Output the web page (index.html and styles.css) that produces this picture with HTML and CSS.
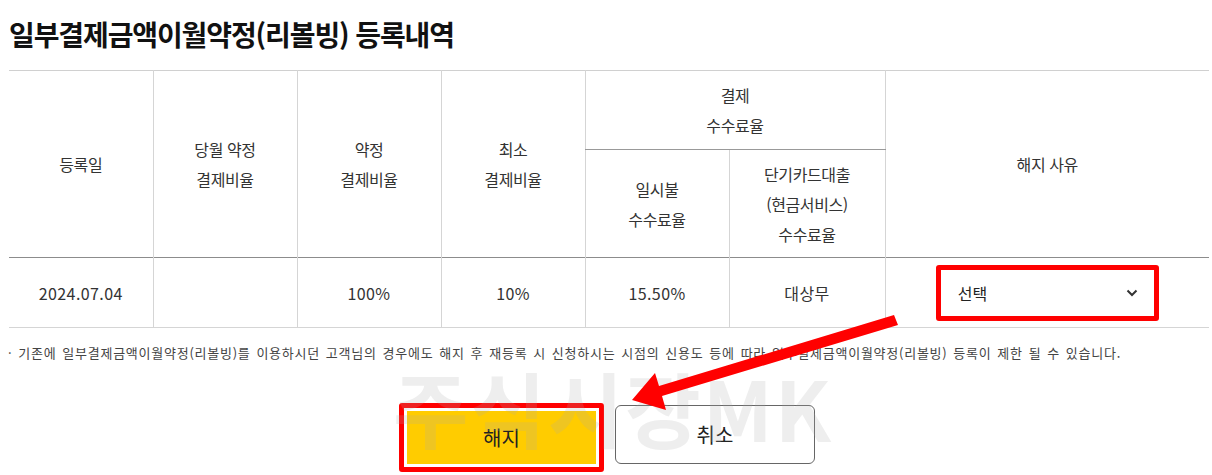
FILE: index.html
```html
<!DOCTYPE html>
<html lang="ko">

<head>
    <meta charset="UTF-8">
    <meta name="viewport" content="width=device-width, initial-scale=1.0">
    <title>일부결제금액이월약정(리볼빙) 등록내역</title>
    <link rel="stylesheet" href="styles.css">
</head>

<body>
    <div class="page">
        <h2 class="title">일부결제금액이월약정(리볼빙) 등록내역</h2>

        <table class="history">
            <colgroup>
                <col class="col-narrow">
                <col class="col-narrow">
                <col class="col-narrow">
                <col class="col-narrow">
                <col class="col-narrow">
                <col class="col-cash">
                <col class="col-reason">
            </colgroup>
            <thead>
                <tr class="row-top">
                    <th rowspan="2">등록일</th>
                    <th rowspan="2">당월 약정<br>결제비율</th>
                    <th rowspan="2">약정<br>결제비율</th>
                    <th rowspan="2">최소<br>결제비율</th>
                    <th colspan="2" class="group">결제<br>수수료율</th>
                    <th rowspan="2">해지 사유</th>
                </tr>
                <tr class="row-sub">
                    <th>일시불<br>수수료율</th>
                    <th>단기카드대출<br>(현금서비스)<br>수수료율</th>
                </tr>
            </thead>
            <tbody>
                <tr class="row-data">
                    <td>2024.07.04</td>
                    <td></td>
                    <td>100%</td>
                    <td>10%</td>
                    <td>15.50%</td>
                    <td>대상무</td>
                    <td>
                        <div class="reason-select">
                            <span>선택</span>
                            <svg class="chevron" width="12" height="8" viewBox="0 0 12 8">
                                <path d="M1.5 1.5 L6 6 L10.5 1.5" fill="none" stroke="#333" stroke-width="2" />
                            </svg>
                        </div>
                    </td>
                </tr>
            </tbody>
        </table>

        <p class="note">· 기존에 일부결제금액이월약정(리볼빙)를 이용하시던 고객님의 경우에도 해지 후 재등록 시 신청하시는 시점의 신용도 등에 따라 일부결제금액이월약정(리볼빙) 등록이 제한 될 수 있습니다.</p>
    </div>

    <div class="actions">
        <div class="highlight">
            <button class="btn btn-cancel-plan">해지</button>
        </div>
        <button class="btn btn-back">취소</button>
    </div>

    <!-- watermark and the red arrow sit over the page -->
    <div class="watermark">주식시장MK</div>
    <svg class="annotation" width="1212" height="475" viewBox="0 0 1212 475">
        <polygon points="632,400 655,373 659,386 894,315 898,325 662,396 666,410" fill="#ff0000" />
    </svg>
</body>

</html>
```

FILE: styles.css
```css
/* Reset */
* {
    margin: 0;
    padding: 0;
    box-sizing: border-box;
}

body {
    font-family: "Noto Sans CJK KR", "Noto Sans", sans-serif;
    color: #333;
    background: #fff;
    position: relative;
    width: 1212px;
    height: 475px;
    overflow: hidden;
}

.page {
    width: 1200px;
    margin-left: 9px;
}

/* Title */
.title {
    font-size: 28px;
    font-weight: 700;
    color: #111;
    letter-spacing: -1.1px;
    line-height: 40px;
    padding-top: 14px;
    margin-bottom: 16px;
}

/* History table */
.history {
    width: 1200px;
    table-layout: fixed;
    border-collapse: collapse;
    border-top: 1px solid #d0d0d0;
}

.col-narrow {
    width: 144px;
}

.col-cash {
    width: 156px;
}

.col-reason {
    width: 324px;
}

.history th,
.history td {
    font-size: 16px;
    font-weight: 400;
    color: #333;
    line-height: 30px;
    text-align: center;
    vertical-align: middle;
    border-left: 1px solid #d5d5d5;
    letter-spacing: -0.4px;
}

.history th:first-child,
.history td:first-child {
    border-left: none;
}

.row-sub th:first-child {
    border-left: 1px solid #d5d5d5;
}

.row-top {
    height: 79px;
}

.row-sub {
    height: 108px;
}

.history .group {
    border-bottom: 1px solid #999;
}

.history td {
    border-top: 1px solid #8c8c8c;
    border-bottom: 1px solid #d5d5d5;
}

.row-data {
    height: 70px;
}

.row-data td {
    letter-spacing: 0.4px;
}

/* Reason select (boxed in red) */
.reason-select {
    width: 223px;
    height: 56px;
    margin: 0 auto;
    border: 5px solid #ff0000;
    border-radius: 3px;
    display: flex;
    align-items: center;
    justify-content: space-between;
    padding: 0 16px 0 17px;
    text-align: left;
}

.reason-select span {
    font-size: 16px;
    color: #222;
    letter-spacing: 0;
}

/* Note */
.note {
    font-size: 13px;
    color: #444;
    line-height: 20px;
    margin-top: 15px;
    margin-left: -1px;
    letter-spacing: 0.75px;
    word-spacing: 1.5px;
}

/* Buttons */
.actions {
    display: flex;
    justify-content: center;
    align-items: flex-start;
    gap: 11px;
    margin-top: 40px;
    padding-left: 2px;
}

.highlight {
    border: 5px solid #ff0000;
    border-radius: 3px;
    padding: 3px;
    background: #fff;
}

.btn {
    font-family: "Noto Sans CJK KR", sans-serif;
    font-size: 20px;
    color: #222;
    cursor: pointer;
}

.btn-cancel-plan {
    display: block;
    width: 189px;
    height: 53px;
    border: none;
    background: #ffcc00;
}

.btn-back {
    width: 200px;
    height: 59px;
    margin-top: 2px;
    border: 1px solid #666;
    border-radius: 6px;
    background: #fff;
}

/* Overlays */
.watermark {
    position: absolute;
    left: 393px;
    top: 352px;
    font-family: "Noto Sans CJK KR", sans-serif;
    font-size: 82px;
    font-weight: 700;
    line-height: 110px;
    letter-spacing: 2px;
    color: rgba(170, 170, 170, 0.2);
    pointer-events: none;
}

.annotation {
    position: absolute;
    left: 0;
    top: 0;
    pointer-events: none;
}
```
